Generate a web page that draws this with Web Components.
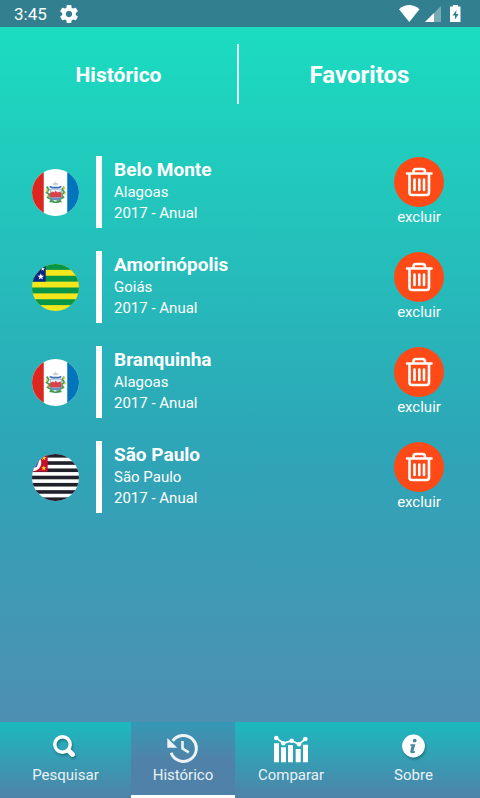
<!DOCTYPE html>
<html lang="pt-BR">
<head>
<meta charset="utf-8">
<meta name="viewport" content="width=device-width, initial-scale=1">
<title>Histórico - Favoritos</title>
<style>
  html, body {
    margin: 0;
    height: 100%;
  }

  body {
    font-family: Roboto, "Liberation Sans", sans-serif;
    color: #fff;
  }
</style>
</head>
<body>
<history-app></history-app>

<script>
const star = (cx, cy, r) => {
  const points = [];
  for (let i = 0; i < 10; i++) {
    const radius = i % 2 ? r * 0.4 : r;
    const angle = -Math.PI / 2 + i * Math.PI / 5;
    points.push(`${(cx + radius * Math.cos(angle)).toFixed(2)},${(cy + radius * Math.sin(angle)).toFixed(2)}`);
  }
  return `<polygon points="${points.join(" ")}"/>`;
};

// Every other stripe of a 48x48 flag, starting from the top
const stripes = (count, color) => {
  const size = 48 / count;
  let rects = "";
  for (let i = 0; i < count; i += 2) {
    rects += `<rect y="${(i * size).toFixed(2)}" width="48" height="${size.toFixed(2)}" fill="${color}"/>`;
  }
  return rects;
};

const FLAGS = {
  alagoas: /* html */`
    <rect width="48" height="48" fill="#fff"/>
    <rect width="12" height="48" fill="#dc2620"/>
    <rect x="36" width="12" height="48" fill="#0274bb"/>
    <path d="M15 18l2 3-2 3 3 2-2 3 4 2-1 2 3 0" fill="none" stroke="#4f9f5a" stroke-width="2"/>
    <path d="M33 18l-2 3 2 3-3 2 2 3-4 2 1 2-4 0" fill="none" stroke="#4f9f5a" stroke-width="2"/>
    <path d="M14 21h2v2h-2zM32 18h2v3h-2zM33 24h2v2h-2zM15 27h2v1h-2z" fill="#ead24a"/>
    <path d="M18 17l3 1h6l3-1v2l-3 1h-6l-3-1z" fill="#3c71b5"/>
    <path d="M24 12.500l1 2 2 0-1 2h-4l-1-2 2 0z" fill="#c9d0d6"/>
    <path d="M19 20.500h11v8q-5 5-11 0z" fill="#eef1f8" stroke="#7d9ccb" stroke-width=".8"/>
    <path d="M18 25l3-2 2 1 1-2 2 2 3-1 1 2v4H18z" fill="#d8434a"/>
    <path d="M19 29h11l-2 3h-7z" fill="#6a8fc4"/>
    <path d="M20 33q4 2 9 0" fill="none" stroke="#399547" stroke-width="1.600"/>`,
  goias: /* html */`
    <rect width="48" height="48" fill="#f4e61c"/>
    ${stripes(8, "#079547")}
    <rect width="14" height="18" fill="#0b2580"/>
    <g fill="#fff">${star(9, 13, 3.6)}${star(11, 5, 2.4)}${star(4, 5, 2.4)}</g>`,
  saopaulo: /* html */`
    <rect width="48" height="48" fill="#fff"/>
    ${stripes(13, "#20202a")}
    <rect width="16" height="18" fill="#c8102a"/>
    <circle cx="1" cy="9" r="8.500" fill="#fff"/>
    <path d="M0 4l5-1 2 5-2 5-5 2z" fill="#3465b0"/>
    <g fill="#f8dc24">${star(12, 4, 2.8)}${star(12, 14.5, 2.8)}</g>`
};

const ICONS = {
  search: /* html */`
    <svg width="36" height="33" viewBox="0 0 36 33" fill="none" stroke="#fff">
      <circle cx="14.500" cy="12.500" r="7.700" stroke-width="3.400"/>
      <path d="M20.500 18.500l4 4" stroke-width="4.800" stroke-linecap="round"/>
    </svg>`,
  history: /* html */`
    <svg width="36" height="33" viewBox="0 0 36 33" fill="none" stroke="#eef3f8">
      <path d="M7.700 8.900A13 13 0 1 1 6.100 20.800" stroke-width="3"/>
      <path d="M2.300 6v9.800h10z" fill="#eef3f8" stroke="none"/>
      <path d="M17.500 9v7.500l6.300 3.800" stroke-width="2.600"/>
    </svg>`,
  chart: /* html */`
    <svg width="36" height="33" viewBox="0 0 36 33" fill="#fff">
      <path d="M1 11.300h5v19H1zM8 15.300h5v15H8zM15 13h5v17.300h-5zM22.700 17h5v13.300h-5zM30 12.700h5v17.600h-5z"/>
      <path d="M3.300 6l7 5.300 8.400-2.600 7.300 3.600 6.300-5.300" fill="none" stroke="#fff" stroke-width="1.700"/>
      <circle cx="3.300" cy="6" r="2.300"/>
      <circle cx="10.300" cy="11.300" r="2.300"/>
      <circle cx="18.700" cy="8.700" r="2.300"/>
      <circle cx="26" cy="12.300" r="2.300"/>
      <circle cx="32.300" cy="7" r="2.300"/>
    </svg>`,
  info: /* html */`
    <svg width="36" height="33" viewBox="0 0 36 33">
      <circle cx="17.500" cy="14" r="11.400" fill="#fff"/>
      <circle cx="18.700" cy="8.600" r="1.900" fill="#44879f"/>
      <path d="M14.500 12.300h4.800l-1.900 7h1.800l-.4 1.500q-4.800 1-4.600-1l1.300-6h-1.300z" fill="#44879f"/>
    </svg>`
};

class StatusBar extends HTMLElement {
  constructor() {
    super();
    this.attachShadow({ mode: "open" });
  }

  static get styles() {
    return /* css */`
      :host {
        display: flex;
        align-items: center;
        justify-content: space-between;
        height: 27px;
        padding: 0 16px 0 14px;
        background: #317f8f;
      }

      div {
        display: flex;
        align-items: center;
      }

      time {
        font-size: 17px;
        margin-right: 12px;
      }

      svg {
        display: block;
        fill: #fff;
      }
    `;
  }

  connectedCallback() {
    this.shadowRoot.innerHTML = /* html */`
    <style>${StatusBar.styles}</style>
    <div>
      <time>3:45</time>
      <svg width="20" height="20" viewBox="1 1 22 22">
        <path d="M19.430 12.980c.04-.32.07-.64.07-.98s-.03-.66-.07-.98l2.110-1.650c.19-.15.24-.42.12-.64l-2-3.460c-.12-.22-.39-.3-.61-.22l-2.490 1c-.52-.4-1.080-.73-1.690-.98l-.38-2.650C14.460 2.180 14.250 2 14 2h-4c-.25 0-.46.18-.49.42l-.38 2.650c-.61.25-1.170.59-1.690.98l-2.490-1c-.23-.09-.49 0-.61.22l-2 3.460c-.13.22-.07.49.12.64l2.110 1.650c-.04.32-.07.65-.07.98s.03.66.07.98l-2.110 1.650c-.19.15-.24.42-.12.64l2 3.460c.12.22.39.3.61.22l2.490-1c.52.4 1.080.73 1.690.98l.38 2.650c.03.24.24.42.49.42h4c.25 0 .46-.18.49-.42l.38-2.650c.61-.25 1.170-.59 1.690-.98l2.490 1c.23.09.49 0 .61-.22l2-3.460c.12-.22.07-.49-.12-.64l-2.110-1.650zM12 15.500c-1.930 0-3.500-1.570-3.500-3.500s1.570-3.500 3.500-3.500 3.500 1.570 3.500 3.500-1.570 3.500-3.500 3.500z"/>
      </svg>
    </div>
    <div>
      <svg width="66" height="20" viewBox="0 0 66 20">
        <path d="M1 5.200Q11 -3 21.500 5.200L11.300 18z"/>
        <path d="M43 2v16H27z" fill-opacity=".35"/>
        <path d="M36 9v9h-9z"/>
        <path fill-rule="evenodd" d="M55 1h5v1.500h2.500v15.500h-10.500V2.500H55zM58.500 6L54.500 11.500h2.500v4l3.500-5.500H58z"/>
      </svg>
    </div>`;
  }
}

class TopTabs extends HTMLElement {
  constructor() {
    super();
    this.attachShadow({ mode: "open" });
  }

  static get styles() {
    return /* css */`
      :host {
        display: grid;
        grid-template-columns: 237fr 2px 241fr;
        padding-top: 17px;
      }

      button {
        appearance: none;
        border: 0;
        padding: 2px 0 0;
        height: 60px;
        background: none;
        color: inherit;
        font: 700 21px/28px Roboto, "Liberation Sans", sans-serif;
      }

      .active {
        font-size: 24px;
      }

      span {
        background: #fffd;
      }
    `;
  }

  connectedCallback() {
    this.shadowRoot.innerHTML = /* html */`
    <style>${TopTabs.styles}</style>
    <button>Histórico</button>
    <span></span>
    <button class="active">Favoritos</button>`;
  }
}

class StateFlag extends HTMLElement {
  constructor() {
    super();
    this.attachShadow({ mode: "open" });
  }

  static get styles() {
    return /* css */`
      :host {
        display: block;
        width: 47px;
        height: 47px;
        border-radius: 50%;
        overflow: hidden;
      }

      svg {
        display: block;
      }
    `;
  }

  connectedCallback() {
    this.shadowRoot.innerHTML = /* html */`
    <style>${StateFlag.styles}</style>
    <svg width="47" height="47" viewBox="0 0 48 48">${FLAGS[this.getAttribute("state")]}</svg>`;
  }
}

class DeleteButton extends HTMLElement {
  constructor() {
    super();
    this.attachShadow({ mode: "open" });
  }

  static get styles() {
    return /* css */`
      :host {
        display: block;
      }

      button {
        appearance: none;
        display: flex;
        flex-direction: column;
        align-items: center;
        border: 0;
        padding: 0;
        background: none;
        color: inherit;
        font: 400 15px/20px Roboto, "Liberation Sans", sans-serif;
      }

      svg {
        display: block;
        border-radius: 50%;
        background: #fe4a17;
      }
    `;
  }

  connectedCallback() {
    this.shadowRoot.innerHTML = /* html */`
    <style>${DeleteButton.styles}</style>
    <button>
      <svg width="50" height="50" viewBox="0 0 50 50" fill="none" stroke="#fff" stroke-width="2.600" stroke-linecap="round" stroke-linejoin="round">
        <path d="M13 16.500h24.500M19.500 16v-1.500q0-2.500 2.500-2.500h6.500q2.500 0 2.500 2.500v1.500M15.500 17v18.500q0 2.500 2.500 2.500h14.500q2.500 0 2.500-2.500V17M20.500 22.500v10.500M25.300 22.500v10.500M30 22.500v10.500"/>
      </svg>
      <slot></slot>
    </button>`;
  }
}

class FavoriteItem extends HTMLElement {
  constructor() {
    super();
    this.attachShadow({ mode: "open" });
  }

  static get styles() {
    return /* css */`
      :host {
        display: flex;
        align-items: center;
        height: 72px;
      }

      .info {
        flex: 1;
        box-sizing: border-box;
        height: 72px;
        margin-left: 17px;
        padding: 2px 0 0 12px;
        border-left: 6px solid #fff;
        font-size: 15px;
        line-height: 21px;
      }

      h2 {
        margin: 0;
        font-size: 19px;
        line-height: 24px;
      }

      p {
        margin: 0;
      }
    `;
  }

  connectedCallback() {
    this.shadowRoot.innerHTML = /* html */`
    <style>${FavoriteItem.styles}</style>
    <state-flag state="${this.getAttribute("flag")}"></state-flag>
    <div class="info">
      <h2><slot name="city"></slot></h2>
      <p><slot name="state"></slot></p>
      <p><slot name="period"></slot></p>
    </div>
    <delete-button>excluir</delete-button>`;
  }
}

class NavItem extends HTMLElement {
  constructor() {
    super();
    this.attachShadow({ mode: "open" });
  }

  static get styles() {
    return /* css */`
      :host {
        display: block;
        background: linear-gradient(#1bb9be, #5082a9);
      }

      :host([active]) {
        background: linear-gradient(#3499b5, #5082a9 50%);
      }

      a {
        display: flex;
        flex-direction: column;
        align-items: center;
        box-sizing: border-box;
        height: 76px;
        padding-top: 10px;
        border-bottom: 3px solid transparent;
        color: #e9f2f6;
        font-size: 15px;
        line-height: 20px;
        text-decoration: none;
      }

      :host([active]) a {
        border-bottom-color: #fff;
      }

      svg {
        display: block;
      }

      .shadow svg {
        filter: drop-shadow(1px 2px 1px #0004);
      }
    `;
  }

  connectedCallback() {
    const icon = this.getAttribute("icon");
    const shadow = icon === "search" || icon === "info" ? "shadow" : "";
    this.shadowRoot.innerHTML = /* html */`
    <style>${NavItem.styles}</style>
    <a href="#" class="${shadow}">${ICONS[icon]}<slot></slot></a>`;
  }
}

class HistoryApp extends HTMLElement {
  constructor() {
    super();
    this.attachShadow({ mode: "open" });
    this.items = [
      { flag: "alagoas", city: "Belo Monte", state: "Alagoas", period: "2017 - Anual" },
      { flag: "goias", city: "Amorinópolis", state: "Goiás", period: "2017 - Anual" },
      { flag: "alagoas", city: "Branquinha", state: "Alagoas", period: "2017 - Anual" },
      { flag: "saopaulo", city: "São Paulo", state: "São Paulo", period: "2017 - Anual" }
    ];
  }

  static get styles() {
    return /* css */`
      :host {
        display: flex;
        flex-direction: column;
        min-height: 100%;
      }

      main {
        flex: 1;
        background: linear-gradient(#1bdcc0, #2da6b7 60%, #4e8fb2);
      }

      .list {
        display: flex;
        flex-direction: column;
        gap: 23px;
        padding: 52px 36px 24px 32px;
      }

      nav {
        display: grid;
        grid-template-columns: 131fr 104fr 112fr 133fr;
      }
    `;
  }

  connectedCallback() {
    this.shadowRoot.innerHTML = /* html */`
    <style>${HistoryApp.styles}</style>
    <status-bar></status-bar>
    <main>
      <top-tabs></top-tabs>
      <div class="list">
        ${this.items.map(item => /* html */`
        <favorite-item flag="${item.flag}">
          <span slot="city">${item.city}</span>
          <span slot="state">${item.state}</span>
          <span slot="period">${item.period}</span>
        </favorite-item>`).join("")}
      </div>
    </main>
    <nav>
      <nav-item icon="search">Pesquisar</nav-item>
      <nav-item icon="history" active>Histórico</nav-item>
      <nav-item icon="chart">Comparar</nav-item>
      <nav-item icon="info">Sobre</nav-item>
    </nav>`;
  }
}

customElements.define("status-bar", StatusBar);
customElements.define("top-tabs", TopTabs);
customElements.define("state-flag", StateFlag);
customElements.define("delete-button", DeleteButton);
customElements.define("favorite-item", FavoriteItem);
customElements.define("nav-item", NavItem);
customElements.define("history-app", HistoryApp);
</script>
</body>
</html>
